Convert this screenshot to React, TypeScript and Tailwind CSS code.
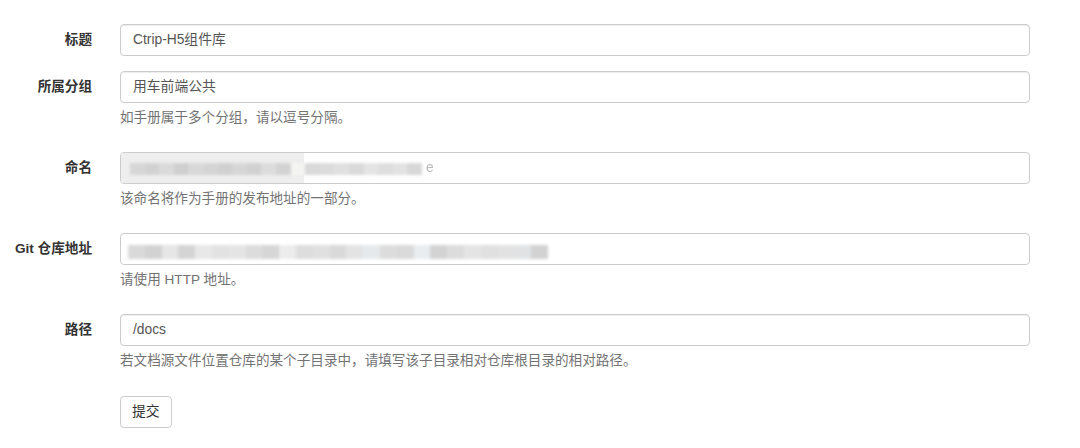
import React from "react";

const font = { fontFamily: '"Liberation Sans", Arial, "Noto Sans CJK SC", sans-serif' };

function Label({ children }: { children: React.ReactNode }) {
  return (
    <div className="w-[92px] h-[32px] shrink-0 flex items-center justify-end text-[13.6px] font-bold text-[#333]">
      {children}
    </div>
  );
}

function Help({ children }: { children: React.ReactNode }) {
  return <div className="mt-[6px] mb-[10px] leading-[18px] text-[13.6px] text-[#737373]">{children}</div>;
}

function TextInput({ value }: { value: string }) {
  return (
    <div className="h-[32px] w-full rounded-[4px] border border-[#ccc] bg-white px-[12px] flex items-center text-[13.8px] text-[#555] shadow-[inset_0_1px_1px_rgba(0,0,0,0.075)]">
      {value}
    </div>
  );
}

const nameBlocks = [
  "#d6d6d6", "#d2d2d2", "#dadada", "#cfcfcf", "#d8d8d8", "#d4d4d4", "#d0d0d0", "#d6d6d6", "#d1d1d1", "#dcdcdc", "#d3d3d3",
  "#f4f4f2", "#d9d9d9", "#dcdcdc", "#e0e0e0", "#dadada", "#e4e4e4", "#dedede", "#e2e2e2", "#d8d8d8",
];
const gitBlocks = [
  "#d9d9d9", "#d2d2d2", "#e6e6e6", "#d4d4d4", "#e8e8e8", "#e2e2e2", "#e4e4e4", "#dcdcdc", "#d6d6d6", "#ececec",
  "#dddddd", "#e0e0e0", "#d9d9d9", "#e3e3e3", "#e6e9ec", "#dcdcdc", "#dadada", "#e9edf0", "#d3d3d3", "#dcdcdc",
  "#e4e4e4", "#e0e0e0", "#e2e2e2", "#e0e2e4", "#d2d2d2",
];

function NameInput() {
  return (
    <div className="relative h-[32px] w-full rounded-[4px] border border-[#ccc] bg-white overflow-hidden">
      <div className="absolute left-0 top-0 bottom-0 w-[183px] bg-[#eee]" />
      <div className="absolute left-[9px] top-[10px] h-[12px] flex blur-[1.5px]">
        {nameBlocks.map((c, i) => (
          <div key={i} className="h-full w-[14.6px]" style={{ background: c }} />
        ))}
      </div>
      <div className="absolute left-[305px] top-[5px] text-[13.8px] text-[#bbb] blur-[0.6px]">e</div>
    </div>
  );
}

function GitInput() {
  return (
    <div className="relative h-[32px] w-full rounded-[4px] border border-[#ccc] bg-white overflow-hidden">
      <div className="absolute left-[7px] top-[11px] h-[14px] flex blur-[1.5px]">
        {gitBlocks.map((c, i) => (
          <div key={i} className="h-full w-[16.8px]" style={{ background: c }} />
        ))}
      </div>
    </div>
  );
}

function Row({ label, children }: { label: string; children: React.ReactNode }) {
  return (
    <div className="flex mb-[15px]">
      <Label>{label}</Label>
      <div className="ml-[28px] w-[910px]">{children}</div>
    </div>
  );
}

export default function App() {
  return (
    <div className="w-[1080px] h-[448px] bg-white pt-[24px] overflow-hidden" style={font}>
      <Row label="标题">
        <TextInput value="Ctrip-H5组件库" />
      </Row>
      <Row label="所属分组">
        <TextInput value="用车前端公共" />
        <Help>如手册属于多个分组，请以逗号分隔。</Help>
      </Row>
      <Row label="命名">
        <NameInput />
        <Help>该命名将作为手册的发布地址的一部分。</Help>
      </Row>
      <Row label="Git 仓库地址">
        <GitInput />
        <Help>请使用 HTTP 地址。</Help>
      </Row>
      <Row label="路径">
        <TextInput value="/docs" />
        <Help>若文档源文件位置仓库的某个子目录中，请填写该子目录相对仓库根目录的相对路径。</Help>
      </Row>
      <div className="flex mt-[-15px] pt-[16px]">
        <div className="w-[92px] shrink-0" />
        <div className="ml-[28px]">
          <button className="h-[32px] px-[11px] rounded-[4px] border border-[#ccc] bg-white text-[13.8px] text-[#333]">
            提交
          </button>
        </div>
      </div>
    </div>
  );
}
